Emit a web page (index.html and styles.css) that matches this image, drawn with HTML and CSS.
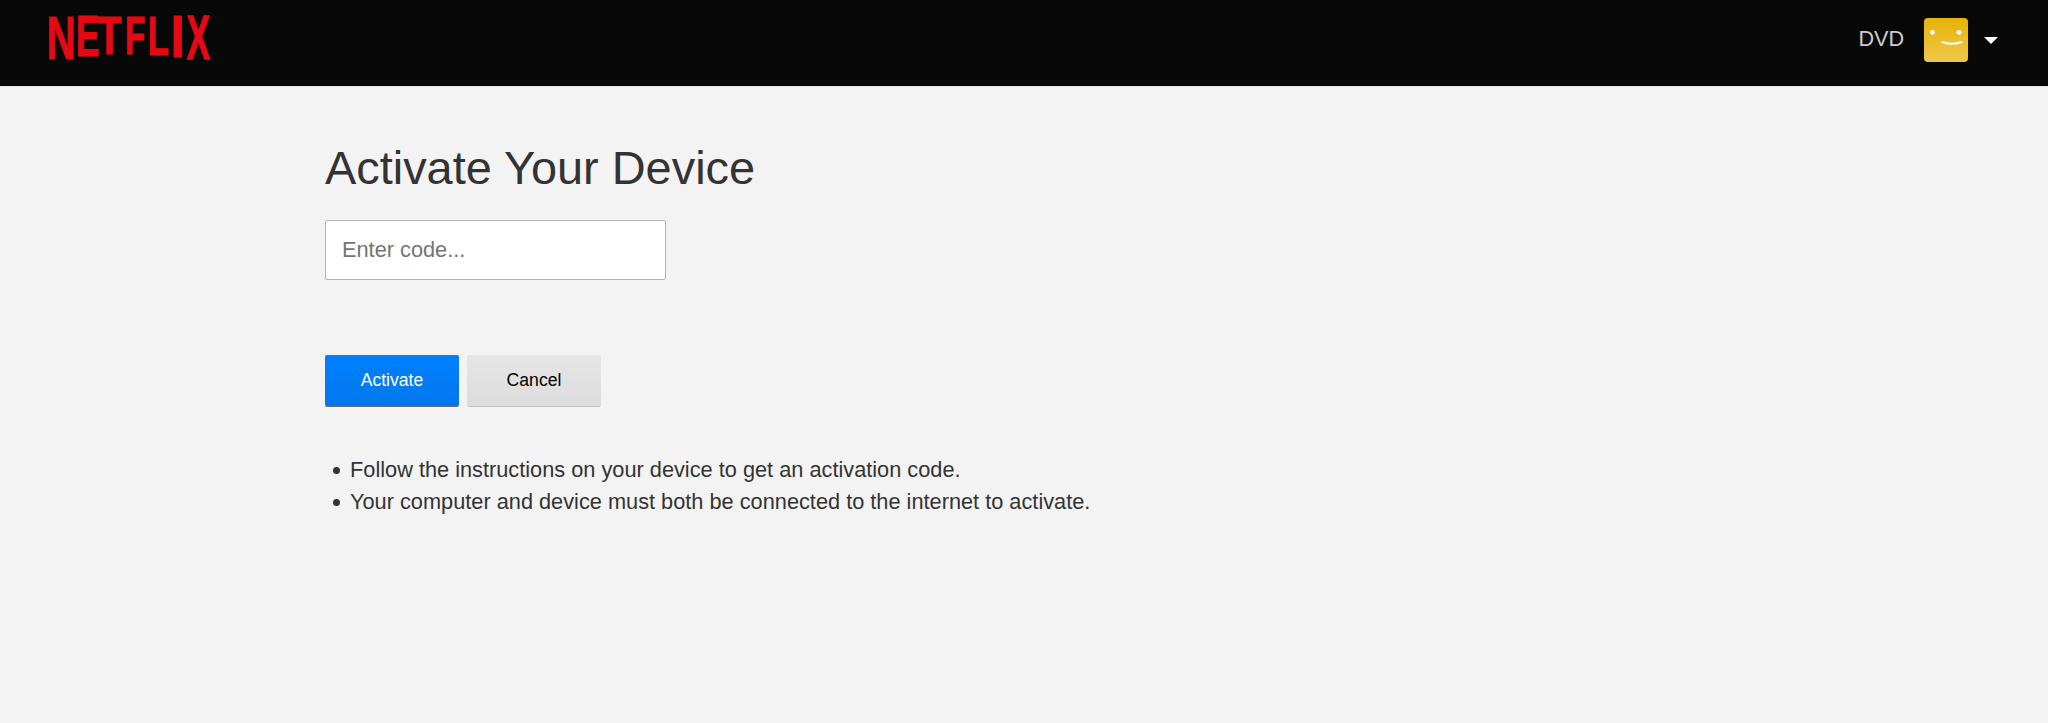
FILE: index.html
```html
<!DOCTYPE html>
<html lang="en">
<head>
<meta charset="utf-8">
<title>Activate Your Device</title>
<link rel="stylesheet" href="styles.css">
</head>
<body>
<header class="topbar">
  <svg class="logo" width="180" height="70" viewBox="40 0 180 70" role="img" aria-label="Netflix">
    <g class="logo-letters">
      <text transform="matrix(0.4 0 0 0.61 47 58.5)">N</text>
      <text transform="matrix(0.35 0 0 0.565 76 55.5)">E</text>
      <text transform="matrix(0.39 0 0 0.54 97.6 53.5)">T</text>
      <text transform="matrix(0.33 0 0 0.54 125 53.5)">F</text>
      <text transform="matrix(0.345 0 0 0.555 147.8 54.5)">L</text>
      <text transform="matrix(0.5 0 0 0.585 170.7 56.5)">I</text>
      <text transform="matrix(0.35 0 0 0.625 186.5 59)">X</text>
    </g>
  </svg>
  <nav class="account">
    <span class="account-name">DVD</span>
    <span class="avatar">
      <svg width="44" height="44" viewBox="0 0 44 44" aria-hidden="true">
        <circle cx="8.5" cy="14.3" r="2.4" fill="#fff"/>
        <circle cx="35" cy="14.3" r="2.4" fill="#fff"/>
        <path d="M18.5 24c6 2.4 12.5 2.4 19 0" fill="none" stroke="#fff" stroke-width="2" stroke-linecap="round"/>
      </svg>
    </span>
    <span class="caret"></span>
  </nav>
</header>
<main class="content">
  <h1 class="title">Activate Your Device</h1>
  <input class="code-input" type="text" placeholder="Enter code...">
  <div class="actions">
    <button class="btn btn-primary" type="button">Activate</button>
    <button class="btn btn-secondary" type="button">Cancel</button>
  </div>
  <ul class="notes">
    <li>Follow the instructions on your device to get an activation code.</li>
    <li>Your computer and device must both be connected to the internet to activate.</li>
  </ul>
</main>
</body>
</html>
```
FILE: styles.css
```css
* { box-sizing: border-box; }
html, body { margin: 0; height: 100%; }
body {
  background: #f3f3f3;
  color: #333;
  font-family: "Liberation Sans", Arial, sans-serif;
  overflow: hidden;
}
.topbar {
  height: 87px;
  background: #080808;
  border-bottom: 1px solid #e6e6e6;
  display: flex;
  justify-content: space-between;
  align-items: flex-start;
  padding: 0 50px 0 40px;
}
.logo { display: block; }
.logo-letters text {
  font-family: "Liberation Sans", Arial, sans-serif;
  font-weight: 700;
  font-size: 100px;
  fill: #e50914;
  stroke: #e50914;
  stroke-width: 2px;
}
.account {
  display: flex;
  align-items: center;
  height: 80px;
}
.account-name {
  font-size: 21.6px;
  color: #ccc;
  margin-right: 20px;
  padding-bottom: 3px;
}
.avatar {
  width: 44px;
  height: 44px;
  border-radius: 4px;
  background: linear-gradient(#e8b305, #eec84e);
  margin-right: 16px;
  display: block;
}
.avatar svg { display: block; }
.caret {
  width: 0;
  height: 0;
  border-left: 7px solid transparent;
  border-right: 7px solid transparent;
  border-top: 7px solid #fff;
}
.content {
  width: 1398px;
  margin: 0 auto;
}
.title {
  margin: 0;
  padding-top: 50px;
  font-size: 46.9px;
  line-height: 62px;
  font-weight: 400;
  color: #333;
}
.code-input {
  display: block;
  width: 341px;
  height: 60px;
  margin-top: 21px;
  padding: 0 16px;
  border: 1px solid #b3b3b3;
  border-radius: 2px;
  background: #fff;
  font: 21.76px "Liberation Sans", Arial, sans-serif;
  color: #333;
}
.code-input::placeholder { color: #757575; opacity: 1; }
.actions {
  display: flex;
  gap: 8px;
  margin-top: 75px;
}
.btn {
  width: 134px;
  height: 51px;
  border: 0;
  border-radius: 2px;
  font: 17.6px "Liberation Sans", Arial, sans-serif;
  padding: 0;
}
.btn-primary {
  background: linear-gradient(#0080ff, #0277ec);
  color: #fff;
  box-shadow: 0 1px 0 rgba(0,0,0,.55);
}
.btn-secondary {
  background: linear-gradient(#e6e6e6, #dddddd);
  color: #000;
  box-shadow: 0 1px 0 rgba(0,0,0,.2);
}
.notes {
  margin: 48px 0 0;
  padding: 0 0 0 8px;
  list-style: none;
  font-size: 21.76px;
  line-height: 32px;
  color: #333;
}
.notes li {
  display: flex;
  align-items: center;
  gap: 10px;
}
.notes li::before {
  content: "";
  flex: none;
  width: 7px;
  height: 7px;
  border-radius: 50%;
  background: #333;
}
```
